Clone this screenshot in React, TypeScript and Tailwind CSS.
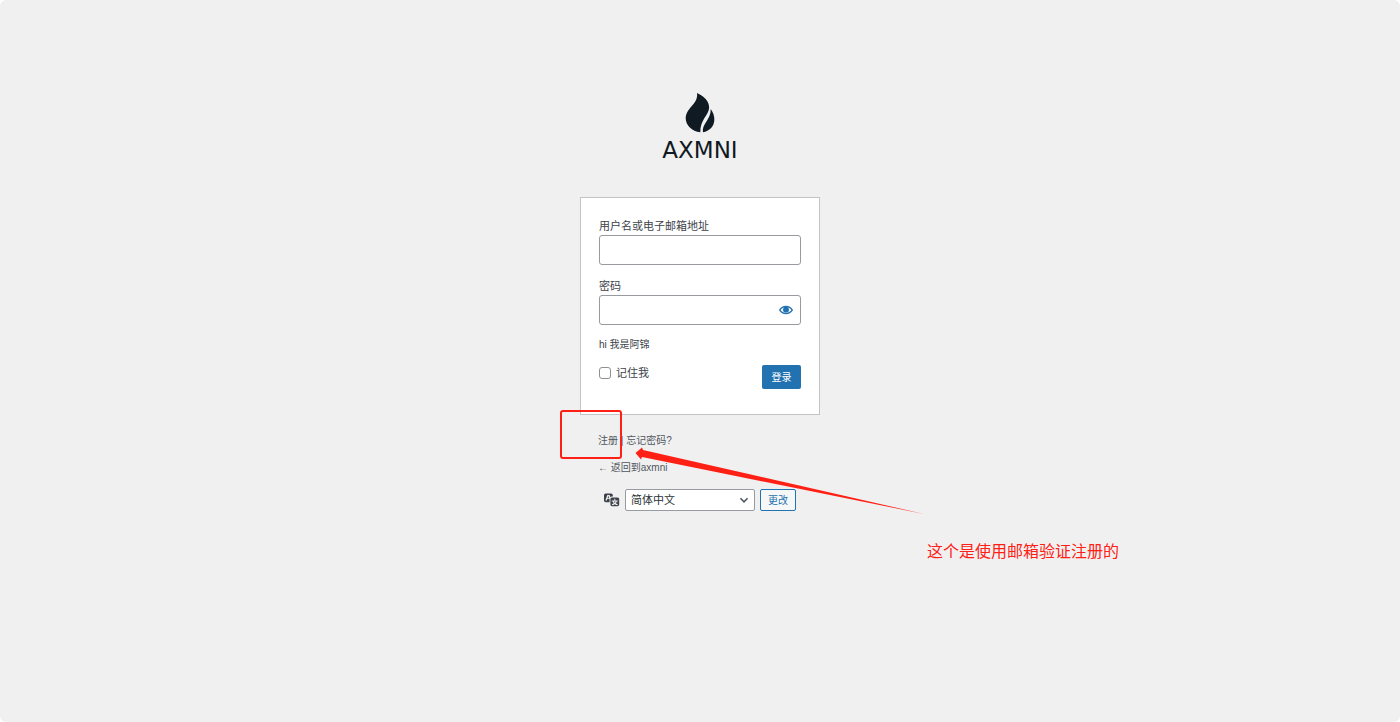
import React, { useState } from "react";

const LANGUAGES = [
  { value: "zh_CN", label: "简体中文" },
  { value: "en_US", label: "English" },
];

const Logo = () => (
  <a href="/" className="flex flex-col items-center text-[#101a23] no-underline">
    <svg viewBox="0 0 90 123" className="h-10 w-[30px]" fill="currentColor" aria-hidden="true">
      <path d="M36 0C60 11 74 27 73 46C72 68 45 82 46 121C20 118 1 100 1 78C1 62 10 52 19 41C28 30 38 20 36 0Z" />
      <path d="M78 49C86 60 90 72 89 84C88 104 74 117 54 121C50 93 79 83 78 49Z" />
    </svg>
    <span className="pt-0.5 font-['DejaVu_Sans',sans-serif] text-[23px] leading-[30px]">AXMNI</span>
  </a>
);

const EyeIcon = () => (
  <svg viewBox="0 0 20 20" className="size-[14px]" fill="currentColor" aria-hidden="true">
    <path d="M19.7 9.4C17.7 6 14 3.9 10 3.9S2.3 6 .3 9.4L0 10l.3.6c2 3.4 5.7 5.5 9.7 5.5s7.7-2.1 9.7-5.5l.3-.6-.3-.6zM10 14.1c-3.1 0-6-1.6-7.7-4.1C3.6 8 5.7 6.6 8 6.1c-.9.6-1.5 1.7-1.5 2.9 0 1.9 1.6 3.5 3.5 3.5s3.5-1.6 3.5-3.5c0-1.2-.6-2.3-1.5-2.9 2.3.5 4.4 1.9 5.7 3.9-1.7 2.5-4.6 4.1-7.7 4.1z" />
    <path d="M8 6.1C6.5 7 5.8 8.4 5.8 9.5a4.2 4.2 0 0 0 8.4 0C14.2 8.4 13.5 7 12 6.1c-.4.9-1 1.3-1.8 1.3S8.4 7 8 6.1z" />
  </svg>
);

const TranslationIcon = () => (
  <svg viewBox="0 0 20 20" className="size-4" fill="currentColor" aria-hidden="true">
    <path d="M11 7H9.49c-.63 0-1.25.3-1.59.7L7 5H4.13l-2.39 7h1.69l.74-2H7v4H2c-1.1 0-2-.9-2-2V5c0-1.1.9-2 2-2h7c1.1 0 2 .9 2 2v2zM6.51 9H4.49l1-2.93zM10 8h7c1.1 0 2 .9 2 2v7c0 1.1-.9 2-2 2h-7c-1.1 0-2-.9-2-2v-7c0-1.1.9-2 2-2zm7.25 5v-1.08h-3.17V9.75h-1.16v2.17H9.75V13h1.28c.11.85.56 1.85 1.28 2.62-.87.36-1.89.62-2.31.62-.01.02.22.97.2 1.46.84 0 2.21-.5 3.28-1.15 1.09.65 2.48 1.15 3.34 1.15-.02-.49.2-1.44.2-1.46-.43 0-1.49-.27-2.38-.63.7-.77 1.14-1.77 1.25-2.61h1.36zm-3.81 1.93c-.5-.46-.85-1.13-1.01-1.93h2.09c-.17.8-.51 1.47-1 1.93l-.04.03s-.03-.02-.04-.03z" />
  </svg>
);

const LoginForm = () => {
  const [showPassword, setShowPassword] = useState(false);

  return (
    <form
      className="border border-[#c3c4c7] bg-white px-[18px] pt-[21px] pb-[25px]"
      onSubmit={(event) => event.preventDefault()}
    >
      <label htmlFor="user" className="block text-[11px] leading-[15px]">
        用户名或电子邮箱地址
      </label>
      <input
        id="user"
        type="text"
        className="mt-px block h-[30px] w-full rounded-[3px] border border-[#989b9f] bg-white px-1 text-lg"
      />

      <label htmlFor="pass" className="mt-[14px] block text-[11px] leading-[15px]">
        密码
      </label>
      <div className="relative mt-px">
        <input
          id="pass"
          type={showPassword ? "text" : "password"}
          className="block h-[30px] w-full rounded-[3px] border border-[#989b9f] bg-white pr-8 pl-1 text-lg"
        />
        <button
          type="button"
          aria-label="显示密码"
          className="absolute inset-y-0 right-0 flex w-[30px] items-center justify-center text-[#2271b1]"
          onClick={() => setShowPassword(!showPassword)}
        >
          <EyeIcon />
        </button>
      </div>

      <p className="mt-3 text-[10px] leading-[15px]">hi 我是阿锦</p>

      <div className="mt-[13px] flex items-start justify-between">
        <label className="flex h-4 items-center gap-[5px] text-[11px] leading-4">
          <input
            type="checkbox"
            className="size-3 appearance-none rounded-[3px] border border-[#8c8f94] bg-white checked:bg-[#2271b1]"
          />
          记住我
        </label>
        <button
          type="submit"
          className="h-6 w-[39px] rounded-[2px] bg-[#2271b1] text-[10px] text-white"
        >
          登录
        </button>
      </div>
    </form>
  );
};

// Red marks that point out the register link
const Annotations = () => (
  <>
    <div className="pointer-events-none absolute -top-[5px] -left-5 h-[49px] w-[62px] rounded-[3px] border-2 border-[#ff2015]" />
    <svg
      viewBox="0 0 290 68"
      className="pointer-events-none absolute top-8 left-[55px] h-[68px] w-[290px]"
      fill="#ff2015"
      aria-hidden="true"
    >
      <path d="M.5 6L7 .5L8 3L289 67L7 10L6 12.5Z" />
    </svg>
    <p className="absolute top-[125px] left-[347px] text-base leading-6 whitespace-nowrap text-[#ff2015]">
      这个是使用邮箱验证注册的
    </p>
  </>
);

const App = () => {
  const [language, setLanguage] = useState("zh_CN");

  return (
    <div className="bg-white">
      <main className="flex min-h-screen flex-col items-center overflow-hidden rounded-md bg-[#f0f0f0] pt-[93px] font-['Liberation_Sans','Noto_Sans_CJK_SC',sans-serif] text-[#3c434a]">
        <Logo />

        <div className="mt-8 w-60">
          <LoginForm />

          <div className="relative pt-[18px] text-[10px] leading-[15px] text-[#50575e]">
            <nav className="px-[18px]">
              <a href="/register">注册</a>
              <span> | </span>
              <a href="/lost-password">忘记密码?</a>
            </nav>
            <p className="mt-3 px-[18px]">
              <a href="/">← 返回到axmni</a>
            </p>

            <form
              className="mt-[14px] flex items-center justify-center gap-[5px]"
              onSubmit={(event) => event.preventDefault()}
            >
              <label htmlFor="language" aria-label="语言" className="pb-[3px] text-[#3c434a]">
                <TranslationIcon />
              </label>
              <div className="relative">
                <select
                  id="language"
                  value={language}
                  onChange={(event) => setLanguage(event.target.value)}
                  className="block h-[22px] w-[130px] appearance-none rounded-[2px] border border-[#989b9f] bg-white px-[5px] text-[11px] leading-4 text-[#2c3338]"
                >
                  {LANGUAGES.map((item) => (
                    <option key={item.value} value={item.value}>
                      {item.label}
                    </option>
                  ))}
                </select>
                <svg
                  viewBox="0 0 20 20"
                  className="pointer-events-none absolute top-[5px] right-[5px] size-3"
                  fill="none"
                  stroke="#50575e"
                  strokeWidth="2.6"
                  aria-hidden="true"
                >
                  <path d="M4 7l6 6 6-6" />
                </svg>
              </div>
              <button
                type="submit"
                className="h-[22px] w-9 rounded-[2px] border border-[#2271b1] bg-[#f6f7f7] text-[#2271b1]"
              >
                更改
              </button>
            </form>

            <Annotations />
          </div>
        </div>
      </main>
    </div>
  );
};

export default App;
